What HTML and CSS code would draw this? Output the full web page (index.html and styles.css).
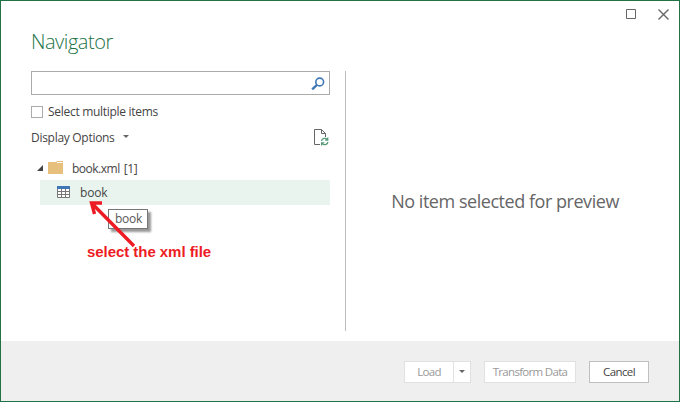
FILE: index.html
```html
<!DOCTYPE html>
<html lang="en">
<head>
<meta charset="utf-8">
<title>Navigator</title>
<link rel="stylesheet" href="styles.css">
</head>
<body>
<div class="window">
  <header class="titlebar">
    <svg class="maximize" width="10" height="10" viewBox="0 0 10 10"><path d="M.5.5h9v9h-9z"/></svg>
    <svg class="close" width="11" height="11" viewBox="0 0 11 11"><path d="M.5.5l10 10M10.5.5l-10 10"/></svg>
  </header>
  <h1 class="title">Navigator</h1>
  <main class="content">
    <section class="sidebar">
      <div class="search">
        <svg width="14" height="14" viewBox="0 0 14 14"><circle cx="8.7" cy="5" r="3.9"/><path d="M5.8 8L1.2 12.4"/></svg>
      </div>
      <label class="multi"><span class="checkbox"></span><span class="multi-text">Select multiple items</span></label>
      <div class="options">
        <span class="options-text">Display Options</span><i class="caret"></i>
        <svg class="refresh" width="15" height="17" viewBox="0 0 15 17"><path class="page" d="M6 15.5H.5V.5h7l4 4V8M7.5.5v4h4"/><path class="arrows" d="M7.5 12a3.4 3.4 0 0 1 5.8-1.6M13.8 8.5v2.7h-2.7M14 13a3.4 3.4 0 0 1-5.8 1.6M7.6 16.5v-2.7h2.7"/></svg>
      </div>
      <div class="tree">
        <div class="node">
          <svg class="expander" width="6" height="6" viewBox="0 0 6 6"><path d="M6 0v6H0z"/></svg>
          <svg class="folder" width="16" height="13" viewBox="0 0 16 13"><path class="folder-back" d="M0 1h8l1-1h6v13H0z"/><path class="folder-line" d="M9 1.5h5.5"/></svg>
          <span class="file">book.xml</span><span class="count">[1]</span>
        </div>
        <div class="node selected">
          <svg class="table" width="13" height="12" viewBox="0 0 13 12"><path class="cells" d="M.5.5h12v11H.5z"/><path class="grid" d="M.5 3v8.5h12V3M.5 5.5h12M.5 8.5h12M4.5 3v8.5M8.5 3v8.5"/><path class="head" d="M0 0h13v3H0z"/></svg>
          <span class="book">book</span>
        </div>
      </div>
    </section>
    <section class="preview"><span class="empty">No item selected for preview</span></section>
  </main>
  <footer class="footer">
    <div class="split"><button class="btn load"><span>Load</span></button><button class="btn more"><i class="caret"></i></button></div>
    <button class="btn transform"><span>Transform Data</span></button>
    <button class="btn cancel"><span>Cancel</span></button>
  </footer>
  <div class="tooltip"><span>book</span></div>
  <svg class="arrow" width="50" height="50" viewBox="0 0 50 50"><path d="M46 46L4 3.5M14 3H3.5L6.5 14"/></svg>
  <div class="note">select the xml file</div>
</div>
</body>
</html>
```
FILE: styles.css
```css
* { box-sizing: border-box; }
body { margin: 0; font: 12px/16px "Open Sans", "Noto Sans", sans-serif; color: #444; }
span, .note { white-space: nowrap; }
svg { display: block; flex: none; fill: none; }
.window { position: relative; display: flex; flex-direction: column; width: 680px; height: 402px; border: 1px solid #217346; background: #fff; overflow: hidden; }
.titlebar { display: flex; justify-content: flex-end; gap: 22px; height: 27px; padding: 8px 10px 0 0; }
.titlebar svg { stroke: #666; }
.close { stroke-width: 1.4; }
.title { height: 43px; margin: 0; padding-left: 30px; font-size: 20px; line-height: 28px; font-weight: 300; color: #217346; letter-spacing: -.45px; }
.content { display: flex; height: 271px; }
.sidebar { width: 344px; padding: 0 15px 0 30px; }
.search { display: flex; justify-content: flex-end; height: 24px; padding: 5px 4px 0 0; border: 1px solid #ababab; }
.search svg { stroke: #3f76b5; stroke-width: 1.6; }
.search path { stroke-width: 2.4; }
.multi { display: flex; align-items: center; gap: 5px; height: 16px; margin-top: 9px; }
.multi-text { letter-spacing: -.29px; }
.checkbox { width: 12px; height: 12px; border: 1px solid #ababab; }
.options { display: flex; height: 17px; margin-top: 9px; align-items: center; }
.options-text { padding-top: 2px; letter-spacing: -.29px; }
.caret { width: 0; height: 0; border: solid transparent; border-width: 3px 3px 0; border-top-color: #666; }
.options .caret { margin: 0 0 1px 8px; }
.refresh { margin-left: auto; margin-right: 1px; }
.page { stroke: #666; }
.arrows { stroke: #569a7a; stroke-width: 1.2; }
.tree { margin-top: 11px; }
.node { display: flex; align-items: center; height: 23px; padding-left: 6px; }
.expander { fill: #444; }
.folder { margin: 0 8px 2px 5px; }
.folder-back { fill: #e8c07e; }
.folder-line { stroke: #fff; }
.file { padding-top: 1px; letter-spacing: -.5px; }
.count { margin-left: 4px; padding-top: 1px; letter-spacing: -.3px; }
.selected { height: 25px; margin-left: 9px; padding-left: 17px; background: #e9f4ee; }
.cells { fill: #fff; }
.grid { stroke: #777; }
.head { fill: #3f76b5; }
.book { margin-left: 10px; padding-top: 2px; letter-spacing: -.2px; }
.table { margin-bottom: 1px; }
.preview { flex: 1; height: 260px; border-left: 1px solid #bdbdbd; display: flex; justify-content: center; align-items: center; padding-right: 15px; }
.empty { padding-top: 1px; font-size: 18px; line-height: 24px; color: #666; letter-spacing: -.46px; }
.footer { display: flex; align-items: flex-start; justify-content: flex-end; gap: 13px; height: 60px; padding: 20px 30px 0 0; background: #efefef; }
.split { display: flex; }
.btn { display: flex; align-items: center; justify-content: center; height: 22px; padding: 0; border: 1px solid #e1e1e1; background: #fff; color: #999; font: inherit; font-size: 11.5px; letter-spacing: -.8px; }
.load { width: 50px; letter-spacing: -.6px; }
.more { width: 18px; margin-left: -1px; }
.more .caret { margin-bottom: 2px; }
.transform { width: 92px; letter-spacing: -.9px; }
.cancel { width: 60px; border-color: #c0c0c0; color: #444; letter-spacing: -.6px; }
.transform, .load { letter-spacing: -.7px; }
.tooltip { position: absolute; left: 107px; top: 208px; width: 40px; height: 20px; border: 1px solid #767676; background: #fff; box-shadow: 3px 3px 2px #999; color: #575757; padding: 1px 0 0 6px; letter-spacing: -.3px; }
.arrow { position: absolute; left: 87px; top: 199px; stroke: #ed1c24; stroke-width: 3.4; }
.note { position: absolute; left: 86px; top: 242px; font: bold 15px/18px "Liberation Sans", Arial, sans-serif; letter-spacing: -.05px; color: #ed1c24; }
```
